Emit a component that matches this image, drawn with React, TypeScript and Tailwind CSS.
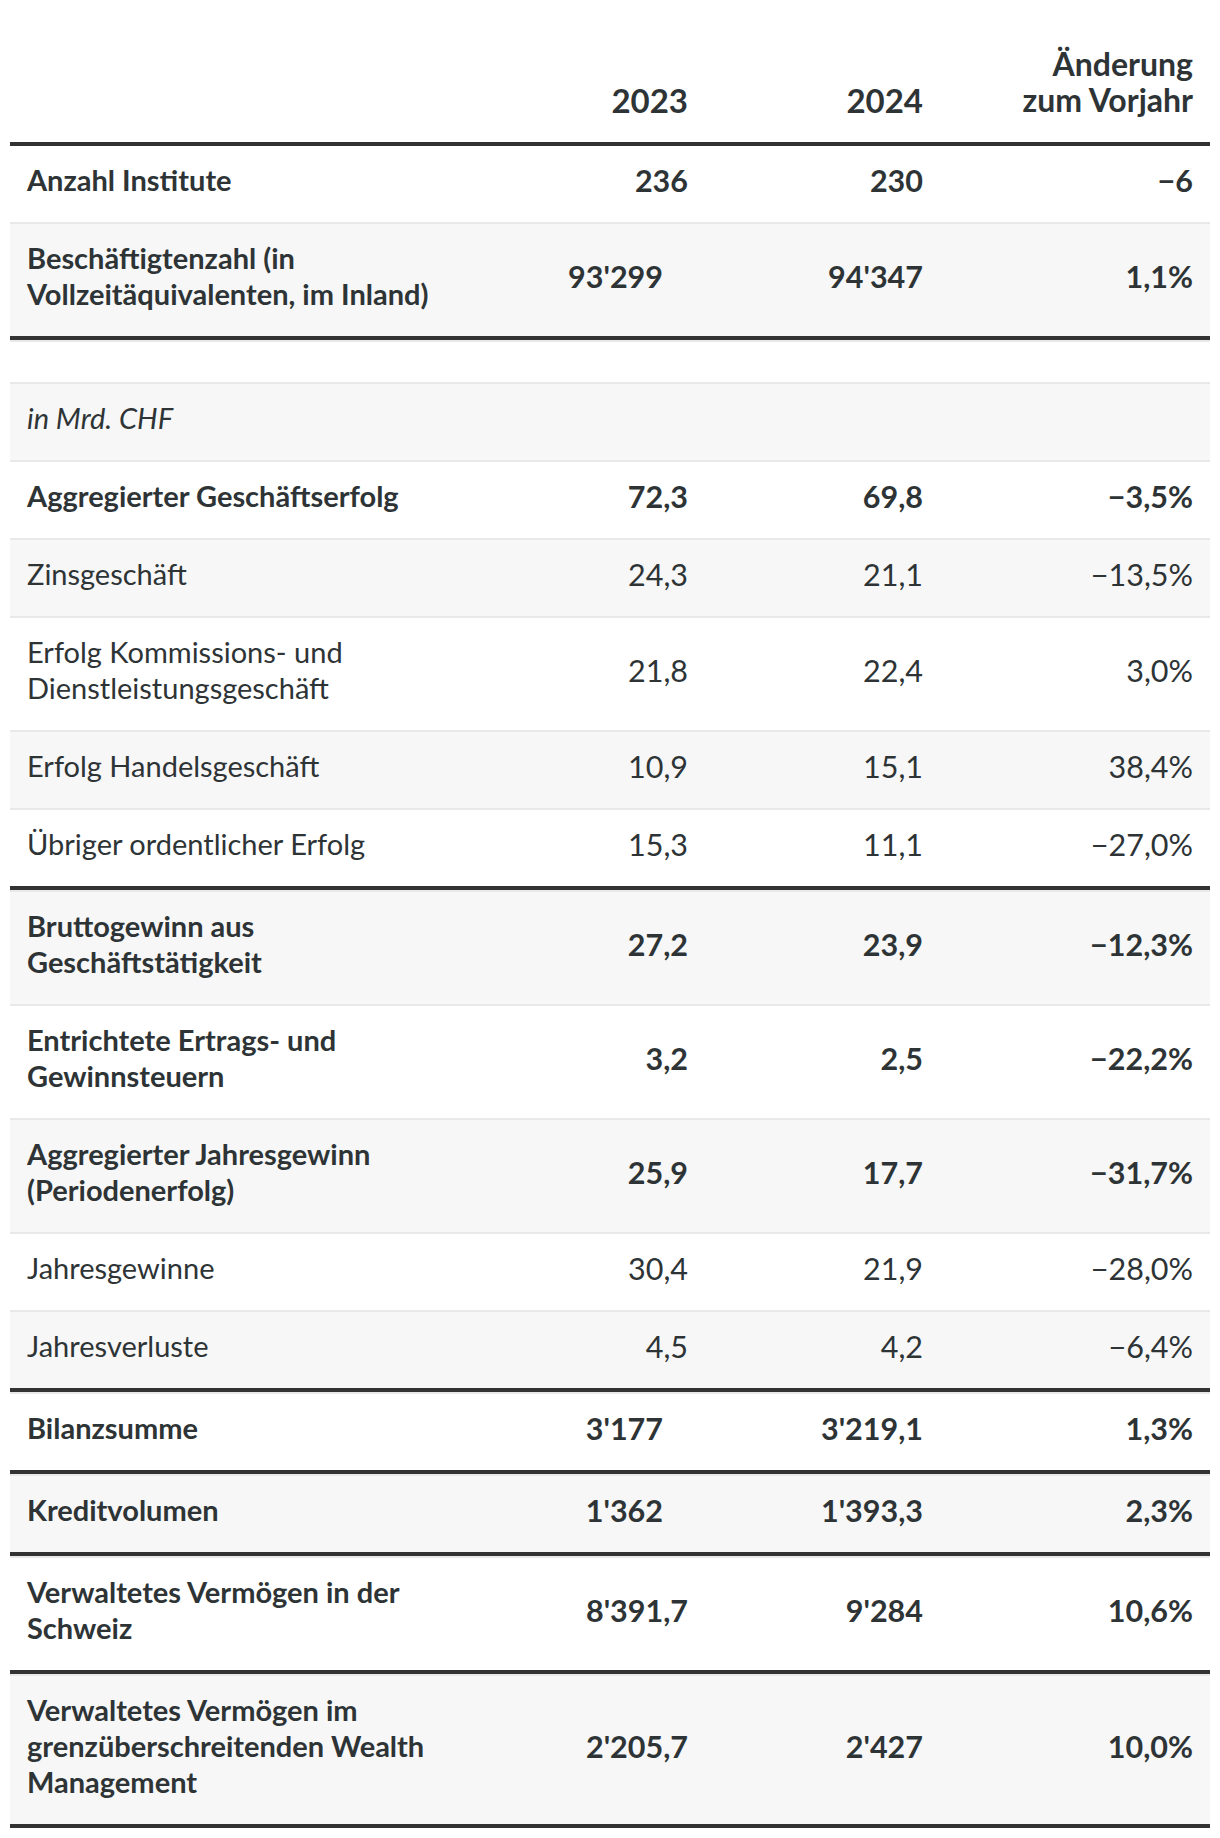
import React from "react";

type Sep = "none" | "light" | "dark";
type Row = {
  label: string;
  v1?: string;
  v2?: string;
  v3?: string;
  bold?: boolean;
  italic?: boolean;
  grey: boolean;
  sep: Sep;
  shift1?: boolean;
  spacer?: boolean;
};

const rows: Row[] = [
  { label: "Anzahl Institute", v1: "236", v2: "230", v3: "\u22126", bold: true, grey: false, sep: "none" },
  { label: "Beschäftigtenzahl (in Vollzeitäquivalenten, im Inland)", v1: "93'299", v2: "94'347", v3: "1,1%", bold: true, grey: true, sep: "light", shift1: true },
  { label: "", grey: false, sep: "dark", spacer: true },
  { label: "in Mrd. CHF", italic: true, grey: true, sep: "light" },
  { label: "Aggregierter Geschäftserfolg", v1: "72,3", v2: "69,8", v3: "\u22123,5%", bold: true, grey: false, sep: "light" },
  { label: "Zinsgeschäft", v1: "24,3", v2: "21,1", v3: "\u221213,5%", grey: true, sep: "light" },
  { label: "Erfolg Kommissions- und Dienstleistungsgeschäft", v1: "21,8", v2: "22,4", v3: "3,0%", grey: false, sep: "light" },
  { label: "Erfolg Handelsgeschäft", v1: "10,9", v2: "15,1", v3: "38,4%", grey: true, sep: "light" },
  { label: "Übriger ordentlicher Erfolg", v1: "15,3", v2: "11,1", v3: "\u221227,0%", grey: false, sep: "light" },
  { label: "Bruttogewinn aus Geschäftstätigkeit", v1: "27,2", v2: "23,9", v3: "\u221212,3%", bold: true, grey: true, sep: "dark" },
  { label: "Entrichtete Ertrags- und Gewinnsteuern", v1: "3,2", v2: "2,5", v3: "\u221222,2%", bold: true, grey: false, sep: "light" },
  { label: "Aggregierter Jahresgewinn (Periodenerfolg)", v1: "25,9", v2: "17,7", v3: "\u221231,7%", bold: true, grey: true, sep: "light" },
  { label: "Jahresgewinne", v1: "30,4", v2: "21,9", v3: "\u221228,0%", grey: false, sep: "light" },
  { label: "Jahresverluste", v1: "4,5", v2: "4,2", v3: "\u22126,4%", grey: true, sep: "light" },
  { label: "Bilanzsumme", v1: "3'177", v2: "3'219,1", v3: "1,3%", bold: true, grey: false, sep: "dark", shift1: true },
  { label: "Kreditvolumen", v1: "1'362", v2: "1'393,3", v3: "2,3%", bold: true, grey: true, sep: "dark", shift1: true },
  { label: "Verwaltetes Vermögen in der Schweiz", v1: "8'391,7", v2: "9'284", v3: "10,6%", bold: true, grey: false, sep: "dark" },
  { label: "Verwaltetes Vermögen im grenzüberschreitenden Wealth Management", v1: "2'205,7", v2: "2'427", v3: "10,0%", bold: true, grey: true, sep: "dark" },
];

function Separator({ sep }: { sep: Sep }) {
  if (sep === "none") return null;
  if (sep === "light") return <div className="h-[2px] bg-[#e9e9e9]" />;
  return (
    <>
      <div className="h-[4px] bg-[#333333]" />
      <div className="h-[2px] bg-[#e9e9e9]" />
    </>
  );
}

function TableRow({ row }: { row: Row }) {
  if (row.spacer) {
    return (
      <>
        <Separator sep={row.sep} />
        <div className="h-[40px] bg-white" />
      </>
    );
  }
  const weight = row.bold ? "font-bold" : "font-normal";
  return (
    <>
      <Separator sep={row.sep} />
      <div
        className={`grid grid-cols-[460px_235px_235px_270px] ${row.grey ? "bg-[#f7f7f7]" : "bg-white"} ${weight}`}
      >
        <div className={`pl-[17px] pr-4 pt-[16px] pb-[24px] ${row.italic ? "italic" : ""}`}>{row.label}</div>
        <div
          className={`self-center text-right text-[30.5px] pt-[16px] pb-[24px] ${row.shift1 ? "pr-[42px]" : "pr-[17px]"}`}
        >
          {row.v1 ?? ""}
        </div>
        <div className="self-center text-right text-[30.5px] pr-[17px] pt-[16px] pb-[24px]">{row.v2 ?? ""}</div>
        <div className="self-center text-right text-[30.5px] pr-[17px] pt-[16px] pb-[24px]">{row.v3 ?? ""}</div>
      </div>
    </>
  );
}

export default function App() {
  return (
    <div className="min-h-[1838px] w-[1220px] bg-white pt-[29px] px-[10px] font-[family-name:Lato,sans-serif] text-[29px] leading-[36px] text-[#2e3436]">
      <div className="w-[1200px]">
        <div className="grid grid-cols-[460px_235px_235px_270px] items-end font-bold text-[32px] leading-[36px]">
          <div className="pl-[17px] pt-[17px] pb-[24px]" />
          <div className="text-right text-[33px] pr-[17px] pt-[17px] pb-[24px]">2023</div>
          <div className="text-right text-[33px] pr-[17px] pt-[17px] pb-[24px]">2024</div>
          <div className="text-right pr-[17px] pt-[17px] pb-[24px]">
            Änderung
            <br />
            zum Vorjahr
          </div>
        </div>
        <div className="h-[4px] bg-[#333333]" />
        {rows.map((r, i) => (
          <TableRow key={i} row={r} />
        ))}
        <div className="h-[4px] bg-[#333333]" />
      </div>
    </div>
  );
}
